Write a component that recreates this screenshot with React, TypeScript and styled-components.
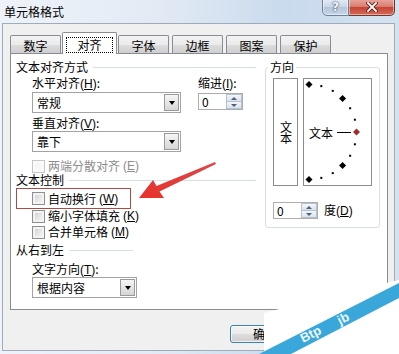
import React from 'react';
import styled, { createGlobalStyle } from 'styled-components';

const FONT = `"Noto Sans CJK SC", "Noto Sans", "Liberation Sans", sans-serif`;

const GlobalStyle = createGlobalStyle`
  html, body { margin: 0; padding: 0; }
  body { width: 399px; height: 354px; overflow: hidden; background: #dce7f3; font-family: ${FONT}; }
  #root { width: 399px; height: 354px; }
`;

const Window = styled.div`
  position: relative;
  width: 399px;
  height: 354px;
  display: flex;
  flex-direction: column;
  background: linear-gradient(90deg, #eef3f9 0%, #e2eaf4 40%, #c9daed 72%, #d5e2f0 100%);
  font-family: ${FONT};
  font-size: 12px;
  color: #000;
  overflow: hidden;
`;

const TitleBar = styled.div`
  height: 23px;
  flex: none;
  display: flex;
  justify-content: space-between;
  align-items: flex-start;
`;

const Title = styled.div`
  padding: 5px 0 0 4px;
  line-height: 13px;
`;

const Captions = styled.div`
  display: flex;
  margin: -2px 4px 0 0;
`;

const CaptionButton = styled.div<{ $kind: 'help' | 'close' }>`
  box-sizing: border-box;
  height: 18px;
  width: ${p => (p.$kind === 'help' ? 27 : 46)}px;
  display: flex;
  align-items: center;
  justify-content: center;
  border: 1px solid ${p => (p.$kind === 'help' ? '#6f8099' : '#70352d')};
  border-left-width: ${p => (p.$kind === 'help' ? 1 : 0)}px;
  border-radius: ${p => (p.$kind === 'help' ? '0 0 0 5px' : '0 0 5px 0')};
  background: ${p =>
    p.$kind === 'help'
      ? 'linear-gradient(#e4ecf6 0%, #cbd7e6 50%, #b4c5db 51%, #c8d6e8 100%)'
      : 'linear-gradient(#eaa89e 0%, #d77a6c 50%, #c74333 51%, #d2695a 100%)'};
  box-shadow: inset 0 0 0 1px rgba(255, 255, 255, 0.45);
`;

const HelpGlyph = styled.span`
  font: bold 12px "DejaVu Sans", sans-serif;
  color: #f4f7fb;
  text-shadow: 0 0 2px #3b4d66, 0 0 1px #3b4d66;
  line-height: 12px;
`;

const Client = styled.div`
  flex: 1;
  margin: 0 4px 3px 2px;
  border: 1px solid #9dabbb;
  background: #f0f0f0;
  display: flex;
  flex-direction: column;
  padding: 0 6px 0 7px;
`;

const TabRow = styled.div`
  margin-top: 8px;
  height: 21px;
  display: flex;
  align-items: flex-end;
  gap: 3px;
  position: relative;
  z-index: 2;
`;

const Tab = styled.div<{ $active?: boolean }>`
  box-sizing: border-box;
  width: ${p => (p.$active ? 55 : 51)}px;
  height: ${p => (p.$active ? 22 : 18)}px;
  margin: ${p => (p.$active ? '0 -2px -1px' : '0')};
  padding-top: 2px;
  border: 1px solid #898c95;
  border-bottom: none;
  border-radius: 2px 2px 0 0;
  background: ${p =>
    p.$active
      ? '#ffffff'
      : 'linear-gradient(#f3f3f3 0%, #ebebeb 50%, #dddddd 51%, #cfcfcf 100%)'};
  display: flex;
  align-items: center;
  justify-content: center;
  line-height: 12px;
  position: relative;
  z-index: ${p => (p.$active ? 2 : 1)};
`;

const Focus = styled.span`
  border: 1px dotted #000;
  padding: 0 10px;
  line-height: 14px;
`;

const Panel = styled.div`
  height: 257px;
  box-sizing: border-box;
  border: 1px solid #898c95;
  background: #ffffff;
  display: flex;
  align-items: flex-start;
  gap: 9px;
  padding: 7px 7px 0 5px;
  position: relative;
  z-index: 1;
`;

const LeftCol = styled.div`
  width: 240px;
  display: flex;
  flex-direction: column;
`;

const SectionHead = styled.div<{ $w?: number; $mt?: number }>`
  display: flex;
  align-items: center;
  height: 12px;
  line-height: 12px;
  width: ${p => (p.$w ? `${p.$w}px` : '100%')};
  margin-top: ${p => p.$mt ?? 0}px;
  white-space: nowrap;
  &::after {
    content: '';
    flex: 1;
    height: 1px;
    margin-left: 5px;
    background: #d5dfe5;
  }
`;

const FieldRow = styled.div`
  display: flex;
  gap: 17px;
  padding-left: 16px;
  margin-top: 4px;
`;

const Field = styled.div<{ $w: number }>`
  width: ${p => p.$w}px;
  display: flex;
  flex-direction: column;
`;

const Label = styled.div<{ $mt?: number; $mb?: number; $indent?: number }>`
  height: 12px;
  line-height: 12px;
  white-space: nowrap;
  margin-top: ${p => p.$mt ?? 0}px;
  margin-bottom: ${p => p.$mb ?? 0}px;
  padding-left: ${p => p.$indent ?? 0}px;
`;

const Combo = styled.div<{ $w: number; $ml?: number }>`
  box-sizing: border-box;
  width: ${p => p.$w}px;
  height: 21px;
  margin-left: ${p => p.$ml ?? 0}px;
  border: 1px solid #a3a3a3;
  background: #fff;
  display: flex;
  align-items: center;
  justify-content: space-between;
  padding: 0 1px 0 4px;
  line-height: 12px;
`;

const DropButton = styled.span`
  box-sizing: border-box;
  width: 15px;
  height: 17px;
  border: 1px solid #9a9a9a;
  background: linear-gradient(#f6f6f6 0%, #e6e6e6 50%, #d6d6d6 100%);
  display: flex;
  align-items: center;
  justify-content: center;
  &::before {
    content: '';
    border-left: 3.5px solid transparent;
    border-right: 3.5px solid transparent;
    border-top: 4px solid #000;
  }
`;

const SpinBox = styled.div<{ $w: number }>`
  box-sizing: border-box;
  width: ${p => p.$w}px;
  height: 17px;
  border: 1px solid #abadb3;
  background: #fff;
  display: flex;
  align-items: center;
  justify-content: space-between;
  padding-left: 3px;
  line-height: 12px;
`;

const SpinButtons = styled.span`
  width: 16px;
  height: 15px;
  display: flex;
  flex-direction: column;
`;

const SpinHalf = styled.span<{ $up?: boolean }>`
  flex: 1;
  box-sizing: border-box;
  border: 1px solid #b6c1ce;
  ${p => (p.$up ? 'border-bottom-width: 0;' : '')}
  background: linear-gradient(#f4f7fa, #d9e2ec);
  display: flex;
  align-items: center;
  justify-content: center;
  &::before {
    content: '';
    border-left: 3px solid transparent;
    border-right: 3px solid transparent;
    ${p => (p.$up ? 'border-bottom: 3px solid #4c607a;' : 'border-top: 3px solid #4c607a;')}
  }
`;

const CheckRow = styled.div<{ $h: number; $mt?: number; $pl?: number; $disabled?: boolean }>`
  display: flex;
  align-items: center;
  gap: 3px;
  height: ${p => p.$h}px;
  margin-top: ${p => p.$mt ?? 0}px;
  padding-left: ${p => p.$pl ?? 16}px;
  line-height: 12px;
  white-space: nowrap;
  color: ${p => (p.$disabled ? '#8d8d8d' : '#000')};
`;

const Box = styled.span<{ $disabled?: boolean }>`
  flex: none;
  width: 13px;
  height: 13px;
  box-sizing: border-box;
  border: 1px solid ${p => (p.$disabled ? '#c6c6c6' : '#8e8f8f')};
  background: ${p =>
    p.$disabled ? '#f7f7f7' : 'linear-gradient(135deg, #c9ccd1 0%, #e6e7e9 55%, #fafafa 100%)'};
  box-shadow: inset 0 0 0 2px ${p => (p.$disabled ? '#fbfbfb' : '#f3f3f3')};
`;

const Highlight = styled.div`
  box-sizing: border-box;
  width: 115px;
  height: 21px;
  margin-top: 2px;
  border: 1px solid #b04a45;
  display: flex;
  align-items: center;
`;

const Group = styled.fieldset`
  margin: 0;
  width: 115px;
  min-width: 0;
  box-sizing: border-box;
  border: 1px solid #d5dfe5;
  border-radius: 3px;
  padding: 5px 7px 8px 7px;
`;

const Legend = styled.legend`
  padding: 0 2px;
  margin-left: -5px;
  line-height: 12px;
  font-size: 12px;
`;

const Orientation = styled.div`
  display: flex;
  gap: 5px;
  height: 108px;
`;

const VerticalBox = styled.div`
  box-sizing: border-box;
  width: 25px;
  height: 108px;
  border: 1px solid #8c8c8c;
  display: flex;
  align-items: center;
  justify-content: center;
`;

const VerticalText = styled.span`
  writing-mode: vertical-rl;
  text-orientation: upright;
  font-size: 12px;
  line-height: 12px;
  letter-spacing: -1px;
`;

const ArcBox = styled.div`
  box-sizing: border-box;
  width: 69px;
  height: 108px;
  border: 1px solid #8c8c8c;
  display: flex;
`;

const DegreeRow = styled.div`
  display: flex;
  align-items: center;
  gap: 6px;
  margin-top: 16px;
  line-height: 12px;
`;

const Mnemonic = styled.span`
  font-family: "Liberation Sans", Arial, sans-serif;
  font-size: 12px;
`;

const ButtonRow = styled.div`
  display: flex;
  gap: 8px;
  margin-top: 15px;
  padding-left: 220px;
`;

const DialogButton = styled.div<{ $default?: boolean }>`
  box-sizing: border-box;
  width: 70px;
  height: 18px;
  border: 1px solid ${p => (p.$default ? '#3c7fb1' : '#707070')};
  border-radius: 3px;
  background: linear-gradient(#f2f2f2 0%, #ebebeb 50%, #dddddd 51%, #cfcfcf 100%);
  box-shadow: inset 0 0 0 1px rgba(255, 255, 255, 0.7);
  display: flex;
  align-items: center;
  justify-content: center;
  line-height: 12px;
`;

const Overlay = styled.svg`
  position: absolute;
  left: 0;
  top: 0;
  pointer-events: none;
  z-index: 5;
`;

const Arc: React.FC = () => {
  const cx = 5;
  const cy = 53;
  const r = 47.5;
  const angles = [90, 75, 60, 45, 30, 15, 0, -15, -30, -45, -60, -75, -90];
  return (
    <svg width="67" height="106" viewBox="0 0 67 106">
      {angles.map(a => {
        const rad = (a * Math.PI) / 180;
        const x = cx + r * Math.cos(rad);
        const y = cy - r * Math.sin(rad);
        if (a % 45 === 0) {
          const s = 3.5;
          return (
            <polygon
              key={a}
              points={`${x},${y - s} ${x + s},${y} ${x},${y + s} ${x - s},${y}`}
              fill={a === 0 ? '#a82a2c' : '#000'}
            />
          );
        }
        return <rect key={a} x={x - 1} y={y - 1} width="2" height="2" fill="#000" />;
      })}
      <text x="5" y="53" dominantBaseline="central" fontSize="12" fontFamily={FONT} fill="#000">
        文本
      </text>
      <line x1="33" y1="53.5" x2="47" y2="53.5" stroke="#000" strokeWidth="1" />
    </svg>
  );
};

const Mn: React.FC<{ k: string }> = ({ k }) => (
  <Mnemonic>
    (<u>{k}</u>)
  </Mnemonic>
);

export default function App() {
  return (
    <>
      <GlobalStyle />
      <Window>
        <TitleBar>
          <Title>单元格格式</Title>
          <Captions>
            <CaptionButton $kind="help">
              <HelpGlyph>?</HelpGlyph>
            </CaptionButton>
            <CaptionButton $kind="close">
              <svg width="12" height="10" viewBox="0 0 12 10">
                <path d="M2 1 L10 9 M10 1 L2 9" stroke="#5b1d15" strokeWidth="3.6" strokeLinecap="square" />
                <path d="M2 1 L10 9 M10 1 L2 9" stroke="#ffffff" strokeWidth="1.8" strokeLinecap="square" />
              </svg>
            </CaptionButton>
          </Captions>
        </TitleBar>
        <Client>
          <TabRow>
            <Tab>数字</Tab>
            <Tab $active>
              <Focus>对齐</Focus>
            </Tab>
            <Tab>字体</Tab>
            <Tab>边框</Tab>
            <Tab>图案</Tab>
            <Tab>保护</Tab>
          </TabRow>
          <Panel>
            <LeftCol>
              <SectionHead>文本对齐方式</SectionHead>
              <FieldRow>
                <Field $w={149}>
                  <Label $mb={3}>
                    水平对齐<Mn k="H" />:
                  </Label>
                  <Combo $w={149}>
                    常规
                    <DropButton />
                  </Combo>
                  <Label $mt={4} $mb={2}>
                    垂直对齐<Mn k="V" />:
                  </Label>
                  <Combo $w={149}>
                    靠下
                    <DropButton />
                  </Combo>
                </Field>
                <Field $w={45}>
                  <Label $mb={4}>
                    缩进<Mn k="I" />:
                  </Label>
                  <SpinBox $w={45}>
                    0
                    <SpinButtons>
                      <SpinHalf $up />
                      <SpinHalf />
                    </SpinButtons>
                  </SpinBox>
                </Field>
              </FieldRow>
              <CheckRow $h={14} $mt={7} $disabled>
                <Box $disabled />
                两端分散对齐<Mn k="E" />
              </CheckRow>
              <SectionHead $mt={1}>文本控制</SectionHead>
              <Highlight>
                <CheckRow $h={19} $pl={15}>
                  <Box />
                  自动换行<Mn k="W" />
                </CheckRow>
              </Highlight>
              <CheckRow $h={14}>
                <Box />
                缩小字体填充<Mn k="K" />
              </CheckRow>
              <CheckRow $h={16} $mt={1}>
                <Box />
                合并单元格<Mn k="M" />
              </CheckRow>
              <SectionHead $w={117} $mt={4}>从右到左</SectionHead>
              <Label $mt={7} $mb={2} $indent={16}>
                文字方向<Mn k="T" />:
              </Label>
              <Combo $w={105} $ml={16}>
                根据内容
                <DropButton />
              </Combo>
            </LeftCol>
            <Group>
              <Legend>方向</Legend>
              <Orientation>
                <VerticalBox>
                  <VerticalText>文本</VerticalText>
                </VerticalBox>
                <ArcBox>
                  <Arc />
                </ArcBox>
              </Orientation>
              <DegreeRow>
                <SpinBox $w={45}>
                  0
                  <SpinButtons>
                    <SpinHalf $up />
                    <SpinHalf />
                  </SpinButtons>
                </SpinBox>
                <span>
                  度<Mn k="D" />
                </span>
              </DegreeRow>
            </Group>
          </Panel>
          <ButtonRow>
            <DialogButton $default>确定</DialogButton>
            <DialogButton>取消</DialogButton>
          </ButtonRow>
        </Client>
        <Overlay width="399" height="354" viewBox="0 0 399 354">
          <defs>
            <linearGradient id="arrowGrad" x1="0" y1="1" x2="1" y2="0">
              <stop offset="0" stopColor="#e8322c" />
              <stop offset="1" stopColor="#d84a4a" />
            </linearGradient>
          </defs>
          <polygon
            points="139,198 153,180 156.5,186 215,162 216,164 159.5,191.5 164,198"
            fill="url(#arrowGrad)"
          />
          <polygon points="264,354 264,313 287,307 399,280 399,354" fill="#ffffff" />
          <polygon points="259,354 291,354 399,298 399,283" fill="#3aa7db" />
          <text
            x="303"
            y="343"
            transform="rotate(-27 303 343)"
            fontSize="13"
            fontWeight="bold"
            fontFamily='"Liberation Sans", sans-serif'
            fill="#e9f5fc"
          >
            Btp
          </text>
          <text
            x="340"
            y="325"
            transform="rotate(-27 340 325)"
            fontSize="13"
            fontWeight="bold"
            fontFamily='"Liberation Sans", sans-serif'
            fill="#e9f5fc"
          >
            jb
          </text>
        </Overlay>
      </Window>
    </>
  );
}
